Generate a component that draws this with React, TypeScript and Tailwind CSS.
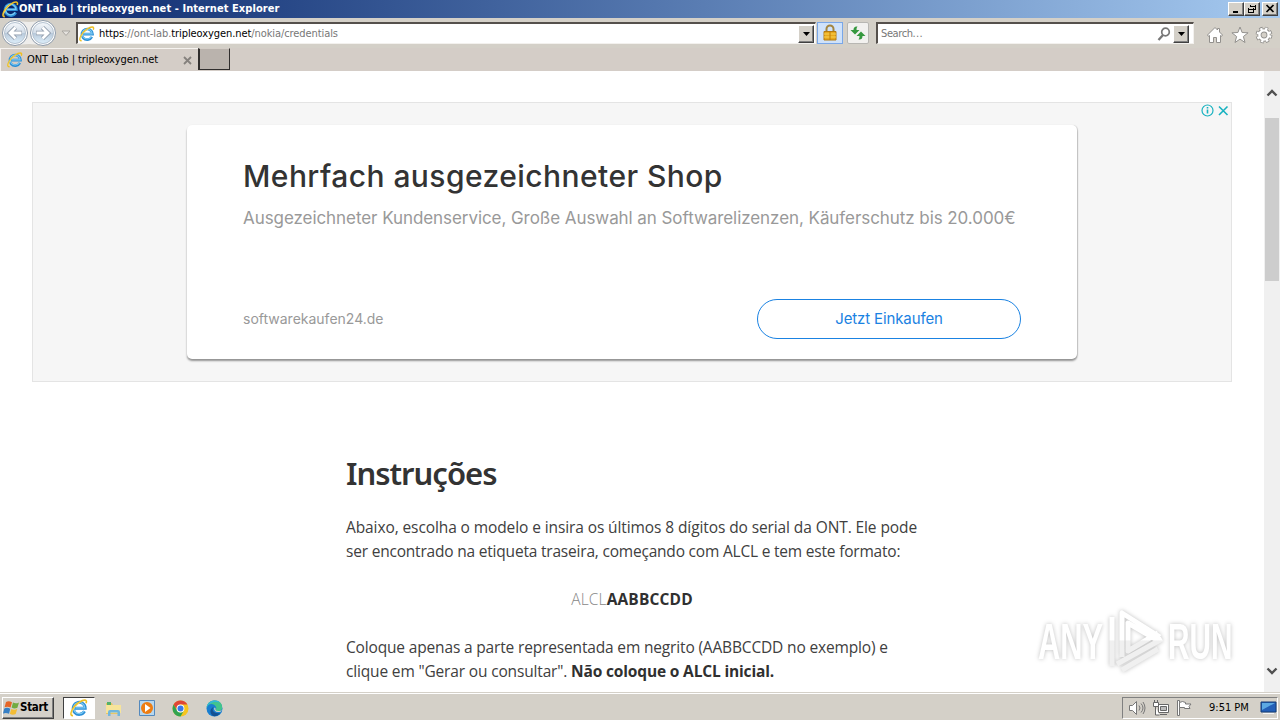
import type { ReactNode } from 'react'

const tahoma = "font-['DejaVu_Sans_Condensed','DejaVu_Sans',sans-serif]"
const raised = 'border border-t-white border-l-white border-r-[#404040] border-b-[#404040] bg-[#d4d0c8] shadow-[inset_-1px_-1px_0_#808080]'

function IeIcon({ size }: { size: number }) {
  return (
    <svg width={size} height={size} viewBox="0 0 18 18" fill="none" className="shrink-0">
      <path d="M14.5 12.2a6 6 0 1 1 .7-3H5" stroke="#2c8fd6" strokeWidth="3" />
      <path d="M13.9 12.1a5.6 5.6 0 1 1 .9-3.2H5.4" stroke="#7cc9f3" strokeWidth="1.3" />
      <path d="M3 16.5C-1.5 17.5 2 8 9 3.5 14 .2 17.7.3 16 4.3" stroke="#eebf22" strokeWidth="1.6" />
      <path d="M2.2 15.6C.8 13.4 4.6 7 10 3.4" stroke="#ffe98a" strokeWidth=".6" />
    </svg>
  )
}

function WindowButton({ children }: { children: ReactNode }) {
  return (
    <button className={`${raised} flex h-[14px] w-4 items-center justify-center`}>
      <svg width="10" height="10" viewBox="0 0 10 10" fill="none" stroke="#000" shapeRendering="crispEdges">
        {children}
      </svg>
    </button>
  )
}

function TitleBar() {
  return (
    <header className="flex h-[18px] items-center bg-linear-to-r from-[#0a246a] to-[#a6caf0] pr-[2px] pl-[2px]">
      <IeIcon size={17} />
      <span className={`${tahoma} mt-px text-[11px] font-bold tracking-[0.07px] whitespace-nowrap text-white`}>
        ONT Lab | tripleoxygen.net - Internet Explorer
      </span>
      <div className="ml-auto flex">
        <WindowButton><path d="M2 8h5" strokeWidth="2" /></WindowButton>
        <WindowButton>
          <path d="M3.5 1v2M3 2h6M8.500 1v5M6 5.500h3M1 5h6M1.500 4v5M6.500 4v5M1 8.500h6" />
        </WindowButton>
        <div className="w-[2px]" />
        <WindowButton><path d="M1.500 1l7 7M8.500 1l-7 7" strokeWidth="1.700" shapeRendering="auto" /></WindowButton>
      </div>
    </header>
  )
}

function RoundArrows() {
  return (
    <svg width="56" height="28" viewBox="0 0 56 28" className="shrink-0">
      <defs>
        <linearGradient id="glass" x1="0" y1="0" x2="0" y2="1">
          <stop offset="0" stopColor="#f5f8fb" />
          <stop offset=".48" stopColor="#d3dde8" />
          <stop offset=".52" stopColor="#b9cadb" />
          <stop offset="1" stopColor="#ddeefa" />
        </linearGradient>
      </defs>
      <path d="M15 1Q29 5 43 1V27Q29 23 15 27Z" fill="#eeedeb" />
      {[15, 43].map((x) => (
        <g key={x}>
          <circle cx={x} cy="14" r="12.500" fill="#fff" stroke="#8c99a9" />
          <circle cx={x} cy="14" r="10.500" fill="url(#glass)" stroke="#b5c3d1" />
        </g>
      ))}
      <path d="M22 14H10m5.500-5.500L10 14l5.500 5.500" fill="none" stroke="#8e9aaa" strokeWidth="4.500" />
      <path d="M21.500 14H10m5.500-5.500L10 14l5.500 5.500" fill="none" stroke="#fff" strokeWidth="2.800" />
      <path d="M36 14h12m-5.500-5.500L48 14l-5.500 5.500" fill="none" stroke="#8e9aaa" strokeWidth="4.500" />
      <path d="M36.500 14H48m-5.500-5.500L48 14l-5.500 5.500" fill="none" stroke="#fff" strokeWidth="2.800" />
    </svg>
  )
}

function DropButton() {
  return (
    <button className={`${raised} flex h-[18px] w-4 shrink-0 items-center justify-center`}>
      <svg width="7" height="4"><path d="M0 0h7L3.500 4z" /></svg>
    </button>
  )
}

function NavBar() {
  return (
    <div className="flex h-[30px] items-center bg-[#d4d0c8]">
      <RoundArrows />
      <svg width="10" height="7" viewBox="0 0 10 7" className="ml-[5px] shrink-0">
        <path d="M1 1h8L5 5.500z" fill="#e5e2de" stroke="#aaa7a2" />
      </svg>
      <div className="ml-[5px] flex h-[22px] w-[740px] items-center border-t-2 border-r border-b border-l-2 border-t-[#55504c] border-r-[#f3f1ee] border-b-[#f3f1ee] border-l-[#55504c] bg-white pr-px pl-px">
        <IeIcon size={16} />
        <span className={`${tahoma} mt-[2px] ml-1 text-[11px] tracking-[-0.08px] whitespace-nowrap text-[#777]`}>
          <span className="text-black">https</span>://ont-lab.<span className="text-black">tripleoxygen.net</span>/nokia/credentials
        </span>
        <div className="ml-auto"><DropButton /></div>
      </div>
      <button className="ml-px flex h-[22px] w-[26px] items-center justify-center border border-[#79a7e8] bg-[#cfe2fa]">
        <svg width="16" height="18" viewBox="0 0 16 18">
          <path d="M4.500 8V5a3.500 3.500 0 0 1 7 0v3" fill="none" stroke="#a3853f" strokeWidth="2" />
          <path d="M2 7.500h12V16H2z" fill="#e9a91b" stroke="#b37b12" />
          <path d="M2 10h12M2 13h12" stroke="#f7d255" />
          <path d="M8 8v8" stroke="#bb7c08" />
        </svg>
      </button>
      <button className="ml-1 flex h-[22px] w-[22px] items-center justify-center rounded-[2px] border border-[#b8b7b3] bg-[#f2f1ef]">
        <svg width="16" height="16" viewBox="0 0 16 16" fill="#35983e">
          <path d="M7.500 1.500Q3.500 1 3.500 5H.5L5 9.500 9.500 5h-3Q6.300 2.800 7.500 1.500z" />
          <path d="M8.500 14.500q4 .5 4-3.500h3L11 6.500 6.500 11h3q.2 2.200-1 3.500z" />
        </svg>
      </button>
      <div className="ml-[7px] flex h-[22px] w-[318px] items-center border-t-2 border-r border-b border-l-2 border-t-[#55504c] border-r-[#f3f1ee] border-b-[#f3f1ee] border-l-[#55504c] bg-white pr-1 pl-[3px]">
        <span className={`${tahoma} mt-[2px] text-[11px] tracking-[-0.4px] text-[#777]`}>Search<span className="tracking-[0.3px]">...</span></span>
        <svg width="14" height="14" viewBox="0 0 14 14" fill="none" stroke="#777" className="ml-auto">
          <circle cx="8.500" cy="5" r="3.800" strokeWidth="1.700" /><path d="m6 8-4.500 5" strokeWidth="2.300" />
        </svg>
        <div className="ml-[2px]"><DropButton /></div>
      </div>
      <div className="mt-[4px] ml-[12px] flex gap-[6.500px]">
        <svg width="18" height="18" viewBox="0 0 18 18" fill="#fff" stroke="#92908d">
          <path d="M1.500 9 9 1.500 11.500 4V2.500h2V6l3 3-1 1.300-1-.8v7h-4v-5h-3v5h-4v-7l-1 .8z" />
        </svg>
        <svg width="18" height="18" viewBox="0 0 18 18" fill="#fff" stroke="#92908d">
          <path d="m9 1 2.100 5.500 6 .3-4.700 3.700 1.600 6L9 13.100l-5 3.400 1.600-6L.9 6.800l6-.3z" />
        </svg>
        <svg width="18" height="18" viewBox="0 0 18 18" fill="none">
          <circle cx="9" cy="9" r="6.300" stroke="#92908d" strokeWidth="4.200" strokeDasharray="3 1.948" />
          <circle cx="9" cy="9" r="4.600" stroke="#92908d" strokeWidth="4.200" />
          <circle cx="9" cy="9" r="6.200" stroke="#fff" strokeWidth="2.600" strokeDasharray="2.200 2.669" strokeDashoffset="-.4" />
          <circle cx="9" cy="9" r="4.600" stroke="#fff" strokeWidth="2.400" />
        </svg>
      </div>
    </div>
  )
}

function TabBar() {
  return (
    <div className="flex h-[23px] bg-[#d4cdc7]">
      <div className="flex w-[198px] items-center border-t border-l border-[#f6f3f0] pl-[6px]">
        <IeIcon size={16} />
        <span className={`${tahoma} mt-px ml-1 text-[11px] tracking-[-0.08px] whitespace-nowrap text-black`}>ONT Lab | tripleoxygen.net</span>
        <svg width="9" height="9" viewBox="0 0 9 9" stroke="#85817d" strokeWidth="1.800" className="mt-px ml-auto mr-[6px]">
          <path d="m1 1 7 7M8 1 1 8" />
        </svg>
      </div>
      <div className="h-[22px] w-8 border border-t-[#d4cdc7] border-l-2 border-[#302e2d] bg-[#bab3ad]" />
    </div>
  )
}

function Ad() {
  return (
    <section className="relative h-[280px] w-[1200px] border border-[#e4e4e4] bg-[#f6f6f6] pt-[22px] pl-[154px] font-['Inter',sans-serif]">
      <div className="h-[234px] w-[890px] rounded-[5px] bg-white px-14 pt-[30px] shadow-[0_2px_2px_rgba(0,0,0,0.4),1px_0_1px_rgba(0,0,0,0.12)]">
        <h2 className="h-[42px] text-[30px] leading-[42px] font-medium tracking-[0.44px] whitespace-nowrap text-[#333]">
          Mehrfach ausgezeichneter Shop
        </h2>
        <p className="mt-[9px] h-6 text-[17px] leading-6 tracking-[-0.067px] whitespace-nowrap text-[#999]">
          Ausgezeichneter Kundenservice, Große Auswahl an Softwarelizenzen, Käuferschutz bis 20.000€
        </p>
        <div className="mt-[69px] flex items-center justify-between">
          <span className="-mt-px text-[14px] text-[#999]">softwarekaufen24.de</span>
          <button className="h-10 w-[264px] rounded-full border border-[#1a82e2] text-[15px] tracking-[-0.12px] text-[#1a82e2]">Jetzt Einkaufen</button>
        </div>
      </div>
      <svg width="28" height="13" viewBox="0 0 28 13" fill="none" stroke="#18b2c0" className="absolute top-[1px] right-[2px]">
        <circle cx="6.500" cy="6.500" r="5.500" strokeWidth="1.200" />
        <path d="M6.500 5.500v4M6.500 3v1.500M18 2.500l8.500 8.500M26.500 2.500l-8.500 8.500" strokeWidth="1.600" />
      </svg>
    </section>
  )
}

function Watermark() {
  return (
    <svg width="220" height="80" viewBox="1024 600 220 80" className="absolute top-[529px] left-[1024px] drop-shadow-[0_0_2px_rgba(0,0,0,0.25)]">
      <defs>
        <linearGradient id="mark" x1="0" y1="612" x2="0" y2="670" gradientUnits="userSpaceOnUse">
          <stop offset=".48" stopColor="#fff" />
          <stop offset=".5" stopColor="#f0f0f0" />
        </linearGradient>
      </defs>
      <g fill="url(#mark)" fontFamily="'Liberation Sans', sans-serif" fontWeight="700" fontSize="50">
        <text transform="translate(1038 659) scale(.62 1)" textLength="105" lengthAdjust="spacingAndGlyphs">ANY</text>
        <text transform="translate(1168 659) scale(.62 1)" textLength="104" lengthAdjust="spacingAndGlyphs">RUN</text>
      </g>
      <g fill="none" stroke="url(#mark)" strokeWidth="5" strokeLinejoin="round">
        <path d="M1160 637 1122 613v44M1157 640l-29-17v28l30-18M1112 617v49M1117 664l45-25M1122 670l36-21" />
      </g>
    </svg>
  )
}

function Scrollbar() {
  return (
    <div className="flex w-4 shrink-0 flex-col items-center bg-[#f0f0f0]">
      <svg width="12" height="8" viewBox="0 0 12 8" fill="none" stroke="#505050" strokeWidth="2.400" className="mt-[18px] shrink-0">
        <path d="m1.500 6.500 4.500-4.500 4.500 4.500" />
      </svg>
      <div className="mt-[21px] h-[163px] w-[14px] bg-[#cdcdcd]" />
      <svg width="12" height="8" viewBox="0 0 12 8" fill="none" stroke="#505050" strokeWidth="2.400" className="mt-auto mb-[17px] shrink-0">
        <path d="M1.500 1.500 6 6l4.500-4.500" />
      </svg>
    </div>
  )
}

function Taskbar() {
  return (
    <footer className="flex h-7 items-center border-t border-[#d4d0c8] bg-[#d4d0c8] px-[2px] shadow-[inset_0_1px_0_#fff]">
      <button className={`${raised} ${tahoma} mt-[2px] flex h-[22px] w-[52px] items-center text-[11.500px] font-bold tracking-[-0.3px] text-black`}>
        <svg width="17" height="16" viewBox="0 0 17 16" className="shrink-0">
          <path d="M3 2c2-1.300 4-.8 6 .3L7.600 7.500c-2-1-4-1.200-6-.2z" fill="#e56527" />
          <path d="M10 2.600c2 1 4 1 6-.2l-1.600 5.300c-2 1-4 .9-5.800-.2z" fill="#72ab42" />
          <path d="M1.300 8.500c2-1 4-.8 6 .2L6 13.800c-2-1-4-1.200-6-.2z" fill="#367fc5" />
          <path d="M8.300 8.900c2 1 4 1 6-.1L12.700 14c-2 1-4 .9-5.800-.2z" fill="#f4bd35" />
        </svg>
        Start
      </button>
      <div className="mt-[2px] ml-[9px] flex h-[22px] w-8 items-center justify-center border border-t-[#404040] border-r-white border-b-white border-l-[#404040] bg-white">
        <IeIcon size={18} />
      </div>
      <div className="mt-[3px] ml-[10px] flex items-center">
        <svg width="17" height="17" viewBox="0 0 17 17" className="mr-4">
          <path d="M1 3h6l1 2h7v9H1z" fill="#e9c665" />
          <path d="M2 2h4v3H2z" fill="#54b16b" /><path d="M1 5h15v8H1z" fill="#f7e49a" />
          <path d="M3 16v-4q0-2 2-2h8q2 0 2 2v4h-2.500v-3.500h-7V16z" fill="#70b6dd" />
        </svg>
        <svg width="18" height="18" viewBox="0 0 18 18" className="mr-4">
          <path d="M1.500 1.500h15v15h-15z" fill="#b7d7ee" stroke="#5489bd" />
          <circle cx="9" cy="9" r="6" fill="#ee7d12" /><path d="m7 5 5.500 4L7 13z" fill="#fff" />
        </svg>
        <svg width="17" height="17" viewBox="0 0 17 17" className="mr-[17px]">
          <circle cx="8.500" cy="8.500" r="8" fill="#f6c51f" />
          <path d="M1.600 4.500A8 8 0 0 1 15.400 4.500H8.500a4 4 0 0 0-3.500 6z" fill="#df4637" />
          <path d="M1.600 4.500A8 8 0 0 0 8.500 16.500L12 10.500a4 4 0 0 1-7 0z" fill="#30a352" />
          <circle cx="8.500" cy="8.500" r="3.900" fill="#fff" /><circle cx="8.500" cy="8.500" r="3" fill="#3979e8" />
        </svg>
        <svg width="17" height="17" viewBox="0 0 17 17">
          <circle cx="8.500" cy="8.500" r="8" fill="#187ed0" />
          <path d="M.5 8C2 3 8 3 10 7c1 2-1 2.500 0 4 1.500 1 5 0 6-2C17 2 12 .5 8.500.5 4 .5 1 3.500.5 8z" fill="#42c58c" />
          <path d="M.5 8C1 3 5 .5 9 .5c2 0 4 .8 5 2C9 1 3 2 .5 8z" fill="#32b7dc" />
          <path d="M8 7c-3 2-1 7 6 6-1.500 3-5 3.500-7 3-4-3-3-8 1-9z" fill="#145192" />
          <path d="M8.200 8c-.5 3 2 5 6.800 3.500l1-1.500c-2 1.500-5 1-6 .5-1-.8 0-2-1-3z" fill="#d4d0c8" />
        </svg>
      </div>
      <div className={`${tahoma} mt-[2px] ml-auto flex h-[22px] w-[156px] items-center border border-t-[#808080] border-r-white border-b-white border-l-[#808080] pl-[5px] text-[11px] text-black`}>
        <svg width="18" height="18" viewBox="0 0 18 18" fill="none" stroke="#777" className="mr-[6px]">
          <path d="M1.500 6.500h3l4-4v13l-4-4h-3z" fill="#fff" /><path d="M11 6.500q2 2.500 0 5M13 4.500q4 4.500 0 9M15 3q4 6 0 12" />
        </svg>
        <svg width="18" height="18" viewBox="0 0 18 18" fill="#fff" stroke="#666" className="mr-[6px]">
          <path d="M6.500 5.500h10v8h-10z" /><path d="M8.500 7.500h6v4h-6z" fill="#bbb" /><path d="M8 15.500h7M3.500 8v8h4M1.500 3.500h5v4h-5zM2.500 1v2M5.500 1v2" />
        </svg>
        <svg width="17" height="18" viewBox="0 0 17 18" fill="#fff" stroke="#777">
          <path d="M1.500 1.500h2v15h-2z" /><path d="M3.500 3.500q3-2 6 0v1.500h5.500l-2 2.500 1 2H8.500V8.500h-5z" />
        </svg>
        <span className="mt-px ml-4 whitespace-nowrap">9:51 PM</span>
        <svg width="17" height="14" viewBox="0 0 17 14" className="ml-auto mr-0">
          <path d="M1 1h15v10H1z" fill="#235fb7" stroke="#123d76" /><path d="M2 2h13L2 9z" fill="#5ca9e3" />
          <path d="M3 12.500h11" stroke="#f5f5f5" />
        </svg>
      </div>
    </footer>
  )
}

export default function App() {
  return (
    <div className="flex h-[720px] w-[1280px] flex-col overflow-hidden bg-white">
      <TitleBar />
      <NavBar />
      <TabBar />
      <div className="relative flex h-[621px] overflow-hidden">
        <main className="min-w-0 flex-1 px-8 pt-[31px]">
          <Ad />
          <article className="mt-[71px] ml-[314px] w-[572px] font-['Open_Sans','Noto_Sans',sans-serif] text-[15.500px] leading-6 text-[#404040]">
            <h1 className="h-10 font-['Noto_Sans',sans-serif] text-[31px] leading-10 font-semibold tracking-[-1px] text-[#333]">Instruções</h1>
            <p className="mt-[22px] whitespace-nowrap">
              <span className="tracking-[-0.1px]">Abaixo, escolha o modelo e insira os últimos 8 dígitos do serial da ONT. Ele pode</span><br />
              <span className="tracking-[-0.2px]">ser encontrado na etiqueta traseira, começando com ALCL e tem este formato:</span>
            </p>
            <p className="mt-6 text-center tracking-[0.15px]">
              <span className="font-light text-[#888]">ALCL</span><b className="text-[#303030]">AABBCCDD</b>
            </p>
            <p className="mt-6 tracking-[-0.16px] whitespace-nowrap">
              Coloque apenas a parte representada em negrito (AABBCCDD no exemplo) e<br />
              clique em "Gerar ou consultar". <b className="text-[#303030]">Não coloque o ALCL inicial.</b>
            </p>
          </article>
        </main>
        <Scrollbar />
        <Watermark />
      </div>
      <Taskbar />
    </div>
  )
}
